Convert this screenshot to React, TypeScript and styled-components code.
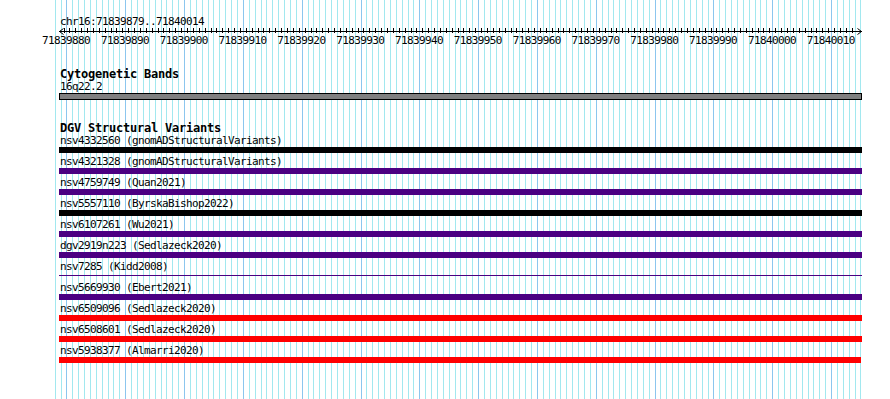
import styled, { createGlobalStyle } from 'styled-components';

const GlobalStyle = createGlobalStyle`
  html, body { margin: 0; padding: 0; background: #fff; }
`;

// grid geometry (pixels per base, first major line at 71839880)
const GRID_X0 = 66.9;
const BP = 5.882;
const TICK_X0 = 64;
const MAJOR_START = 71839880;

const Panel = styled.div`
  position: relative;
  width: 890px;
  height: 399px;
  overflow: hidden;
  background: #fff;
  color: #000;
  font-family: "DejaVu Sans Mono", "Liberation Mono", monospace;
`;

const GridLayer = styled.svg`
  position: absolute;
  left: 0;
  top: 0;
  width: 890px;
  height: 399px;
`;

const Content = styled.div`
  position: relative;
  display: flex;
  flex-direction: column;
  padding-top: 16px;
`;

const Label = styled.div<{ $gap?: number }>`
  height: 11px;
  margin-top: ${({ $gap }) => $gap ?? 0}px;
  padding-left: 60px;
  font-size: 11px;
  line-height: 11px;
  letter-spacing: -0.62px;
  white-space: nowrap;
`;

const TrackTitle = styled.div<{ $gap: number }>`
  height: 12px;
  margin-top: ${({ $gap }) => $gap}px;
  padding-left: 60px;
  font-size: 12px;
  line-height: 12px;
  font-weight: bold;
  letter-spacing: -0.22px;
  white-space: nowrap;
`;

const Ruler = styled.svg`
  display: block;
  width: 890px;
  height: 41px;
  font-family: "DejaVu Sans Mono", "Liberation Mono", monospace;
  font-size: 11px;
  letter-spacing: -0.62px;
`;

const BandBar = styled.div`
  box-sizing: border-box;
  width: 803px;
  height: 7px;
  margin: 1px 0 0 59px;
  border: 1px solid #000;
  background: #808080;
`;

const FeatureList = styled.div`
  display: flex;
  flex-direction: column;
  margin-top: 1px;
`;

const FeatureRow = styled.div`
  display: flex;
  flex-direction: column;
  height: 21px;
`;

const FeatureBar = styled.div<{ $color: string; $thin?: boolean; $width: number }>`
  width: ${({ $width }) => $width}px;
  height: ${({ $thin }) => ($thin ? 1 : 6)}px;
  margin: ${({ $thin }) => ($thin ? 3 : 1)}px 0 0 59px;
  background: ${({ $color }) => $color};
`;

const INDIGO = '#4b0082';

const variants = [
  { id: 'nsv4332560', src: 'gnomADStructuralVariants', color: '#000' },
  { id: 'nsv4321328', src: 'gnomADStructuralVariants', color: INDIGO },
  { id: 'nsv4759749', src: 'Quan2021', color: INDIGO },
  { id: 'nsv5557110', src: 'ByrskaBishop2022', color: '#000' },
  { id: 'nsv6107261', src: 'Wu2021', color: INDIGO },
  { id: 'dgv2919n223', src: 'Sedlazeck2020', color: INDIGO },
  { id: 'nsv7285', src: 'Kidd2008', color: INDIGO, thin: true },
  { id: 'nsv5669930', src: 'Ebert2021', color: INDIGO },
  { id: 'nsv6509096', src: 'Sedlazeck2020', color: '#ff0000' },
  { id: 'nsv6508601', src: 'Sedlazeck2020', color: '#ff0000' },
  { id: 'nsv5938377', src: 'Almarri2020', color: '#ff0000', width: 802 },
];

const gridLines = Array.from({ length: 138 }, (_, k) => {
  const i = k - 2;
  return { x: Math.floor(GRID_X0 + BP * i) + 0.5, major: i % 10 === 0 };
});

const ticks = Array.from({ length: 135 }, (_, i) => Math.floor(TICK_X0 + BP * i) + 0.5);

const scaleLabels = Array.from({ length: 14 }, (_, k) => ({
  x: GRID_X0 + BP * 10 * k - 0.8,
  text: String(MAJOR_START + 10 * k),
}));

const App = () => (
  <Panel>
    <GlobalStyle />
    <GridLayer viewBox="0 0 890 399" shapeRendering="crispEdges">
      {gridLines.map(({ x, major }) => (
        <line key={x} x1={x} x2={x} y1={0} y2={399} stroke={major ? '#8cc6ee' : '#a2e8ef'} strokeWidth={1} />
      ))}
    </GridLayer>
    <Content>
      <Label>chr16:71839879..71840014</Label>
      <Ruler viewBox="0 0 890 41">
        <g stroke="#000" strokeWidth={1} shapeRendering="crispEdges">
          <line x1={59} x2={862} y1={4.5} y2={4.5} />
          {ticks.map((x) => (
            <line key={x} x1={x} x2={x} y1={1} y2={6} />
          ))}
        </g>
        <g stroke="#000" strokeWidth={1} fill="none">
          <polyline points="63.5,1.5 59.5,4.5 63.5,7.5" />
          <polyline points="857.5,1.5 861.5,4.5 857.5,7.5" />
        </g>
        {scaleLabels.map((l) => (
          <text key={l.text} x={l.x} y={17} textAnchor="middle" fill="#000">
            {l.text}
          </text>
        ))}
      </Ruler>
      <TrackTitle $gap={0}>Cytogenetic Bands</TrackTitle>
      <Label $gap={1}>16q22.2</Label>
      <BandBar />
      <TrackTitle $gap={22}>DGV Structural Variants</TrackTitle>
      <FeatureList>
        {variants.map((v) => (
          <FeatureRow key={v.id}>
            <Label>
              {v.id} ({v.src})
            </Label>
            <FeatureBar $color={v.color} $thin={v.thin} $width={v.width ?? 803} />
          </FeatureRow>
        ))}
      </FeatureList>
    </Content>
  </Panel>
);

export default App;
